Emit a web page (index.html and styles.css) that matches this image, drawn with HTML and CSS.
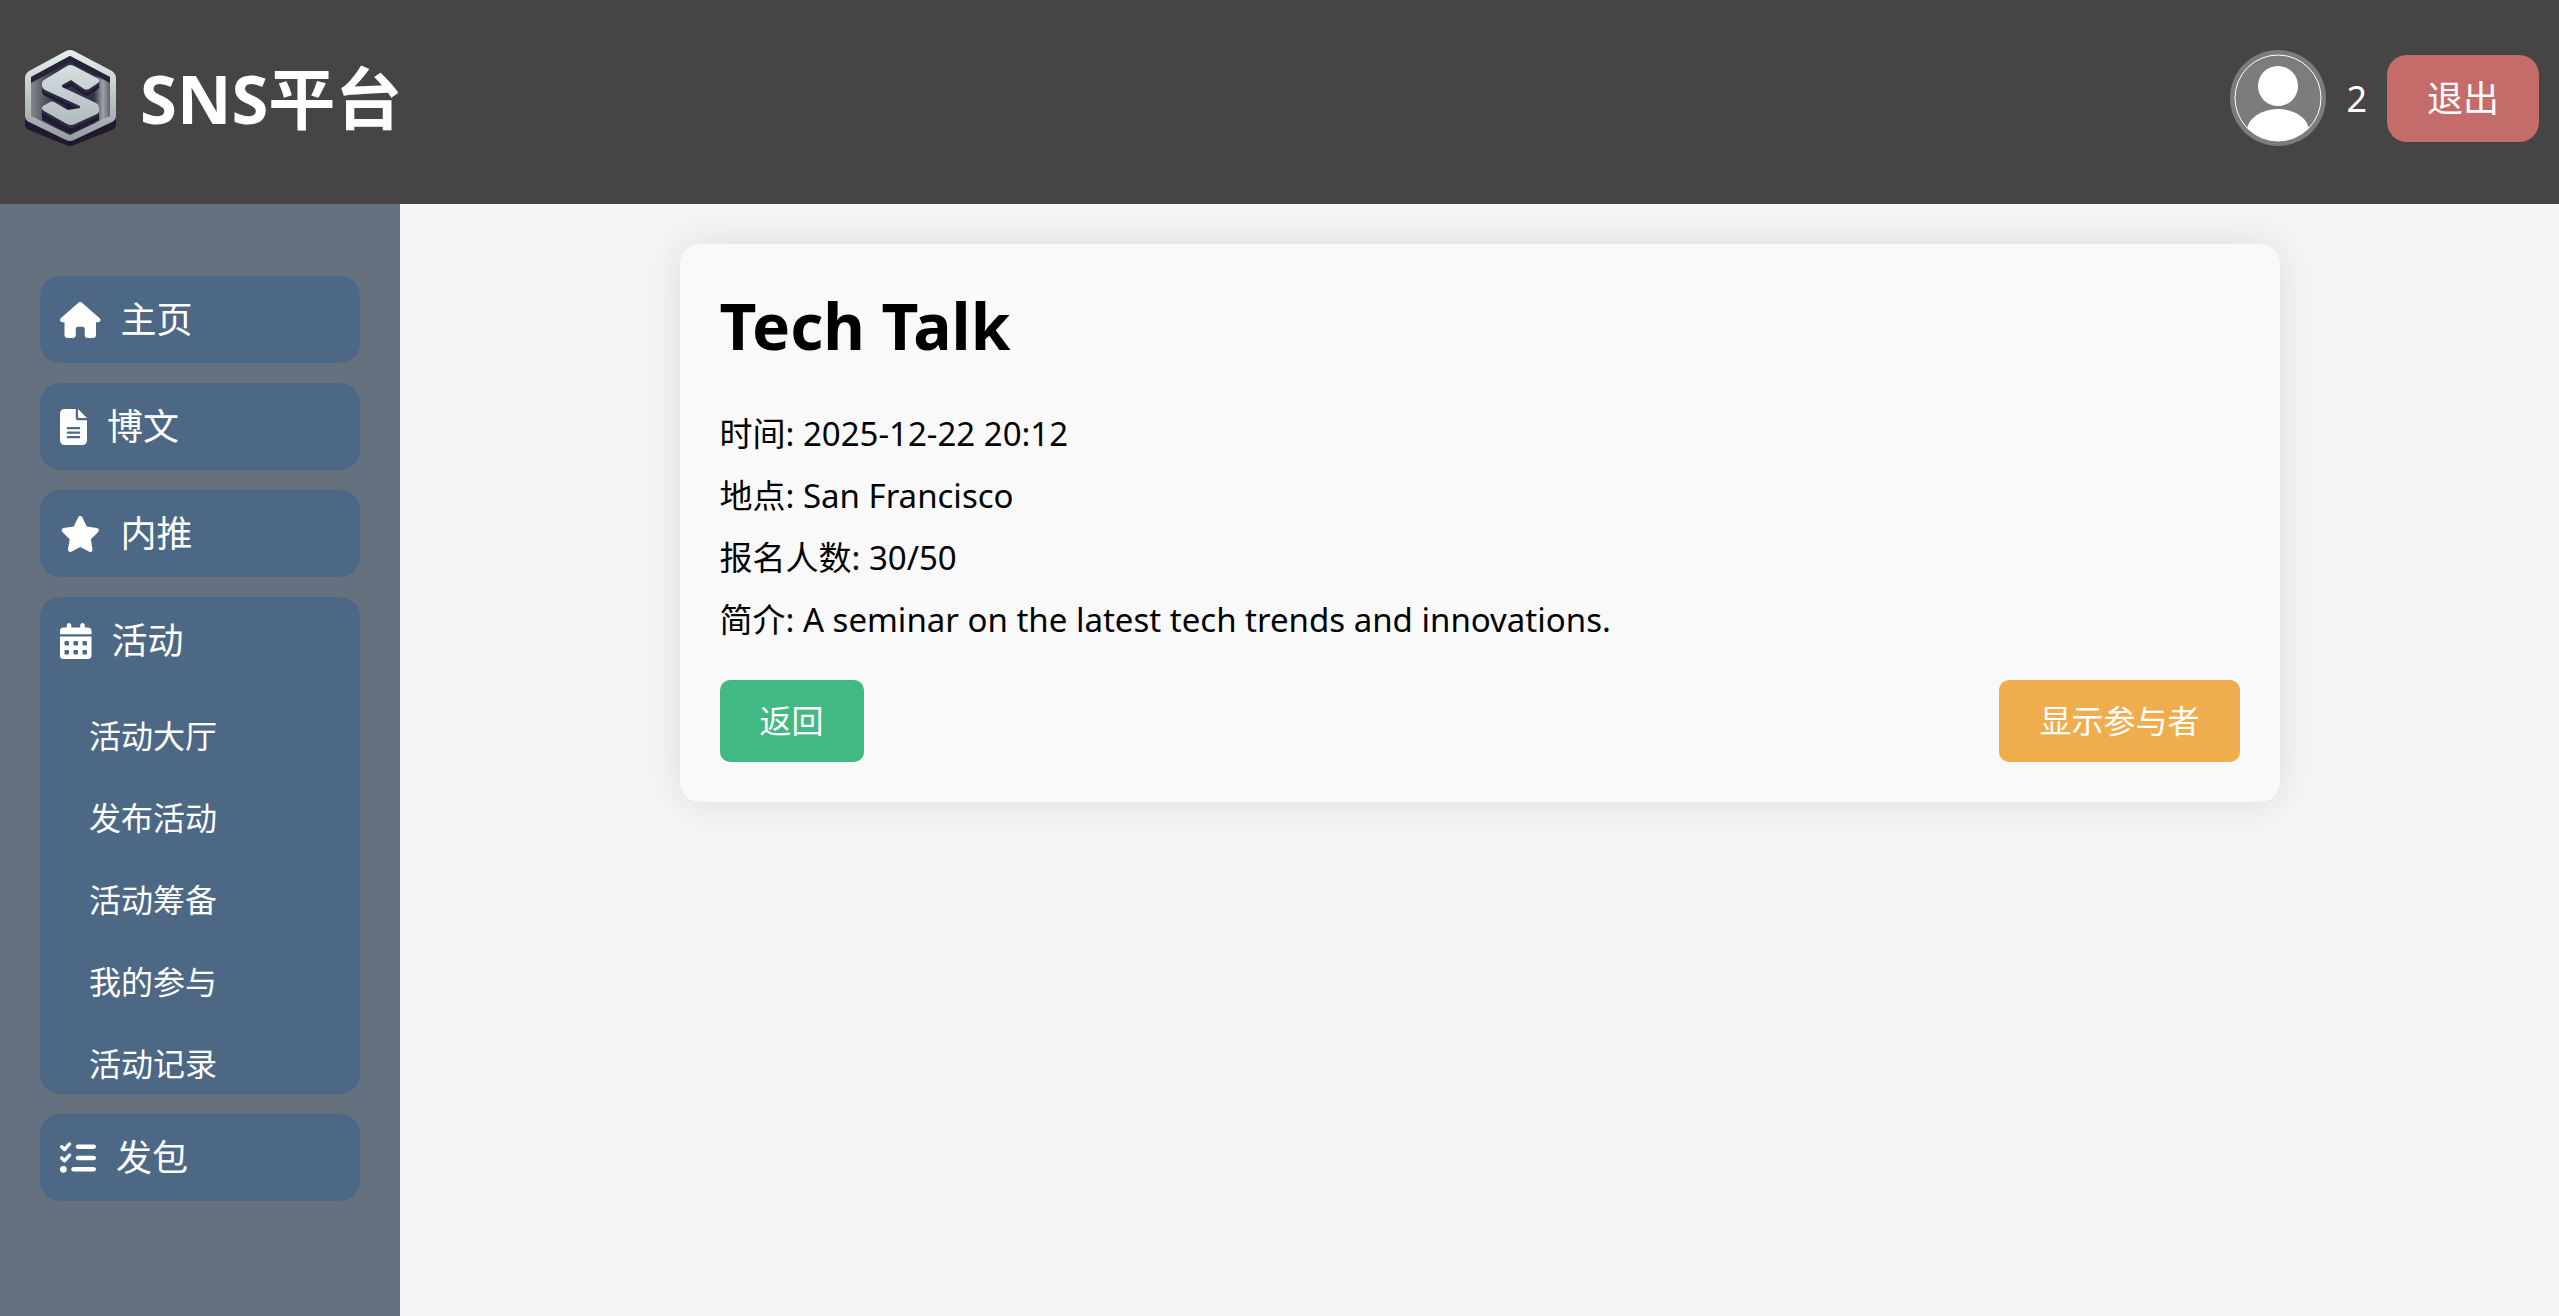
FILE: index.html
```html
<!DOCTYPE html>
<html lang="zh-CN">
<head>
<meta charset="utf-8">
<meta name="viewport" content="width=device-width, initial-scale=1">
<title>SNS平台</title>
<link rel="stylesheet" href="styles.css">
</head>
<body>
<header class="topbar">
  <div class="brand">
    <svg class="brand-logo" viewBox="0 0 96 96" aria-hidden="true">
      <defs>
        <linearGradient id="rim" x1="0" y1="0" x2="0" y2="1">
          <stop offset="0" stop-color="#e6f1ee"/>
          <stop offset="1" stop-color="#939ca2"/>
        </linearGradient>
        <linearGradient id="plate" x1="0" y1="0" x2="1" y2="0">
          <stop offset="0" stop-color="#85868c"/>
          <stop offset="0.15" stop-color="#5c5c68"/>
          <stop offset="0.3" stop-color="#34344a"/>
          <stop offset="0.8" stop-color="#34354a"/>
          <stop offset="0.91" stop-color="#a0a3a9"/>
          <stop offset="1" stop-color="#5f616d"/>
        </linearGradient>
        <linearGradient id="face" x1="0" y1="0" x2="0" y2="1">
          <stop offset="0" stop-color="#d6e0e0"/>
          <stop offset="1" stop-color="#b0b9bd"/>
        </linearGradient>
        <path id="letter" d="M45 16q3-2 7 0l23 12q4 2 1 5l-9 6q-2 1-5 0l-13-9-9 5v2l34 16q3 2 3 4v4q0 2-2 3L53 74q-4 2-8 0L22 61q-4-3-1-5l7-4q2-1 4 0l14 8 12-2v-2L23 40q-3-2-3-4v-3q0-2 2-3z"/>
      </defs>
      <path fill="#20182e" d="M44 6q4-2 8 0l38 21q4 2 4 7v40q0 4-4 6L52 95q-4 2-8 0L7 80q-4-2-4-6V34q0-5 4-7z"/>
      <path fill="url(#rim)" d="M44 1q4-2 8 0l38 20q4 3 4 7v38q0 4-4 6L52 90q-4 2-8 0L7 72q-4-2-4-6V28q0-4 4-7z"/>
      <path fill="url(#plate)" d="M48 6L88 27v39L48 85 9 66V27z"/>
      <path fill="#242337" d="M48 6L88 27v6L48 12 9 33v-6z"/>
      <path fill="#241d35" d="M20 56v14l28 14 29-14V56z"/>
      <use href="#letter" y="6" fill="#1f1a30"/>
      <use href="#letter" y="3" fill="#2c2c40"/>
      <use href="#letter" fill="url(#face)"/>
    </svg>
    <span class="brand-name">SNS平台</span>
  </div>
  <div class="account">
    <svg class="avatar" viewBox="0 0 96 96" role="img" aria-label="用户头像">
      <defs><clipPath id="disc"><circle cx="48" cy="48" r="43"/></clipPath></defs>
      <circle cx="48" cy="48" r="48" fill="#7c7c7c"/>
      <circle cx="48" cy="48" r="43" fill="none" stroke="#fff"/>
      <g fill="#fff" clip-path="url(#disc)">
        <circle cx="48" cy="36" r="20"/>
        <ellipse cx="48" cy="81" rx="31" ry="22"/>
      </g>
    </svg>
    <span class="account-name">2</span>
    <button class="logout" type="button">退出</button>
  </div>
</header>
<div class="layout">
  <nav class="sidebar" aria-label="主导航">
    <ul class="menu">
      <li class="menu-item">
        <a class="menu-link" href="#home">
          <svg class="icon" viewBox="0 0 576 512" aria-hidden="true"><path d="M575.8 255.5c0 18-15 32.1-32 32.1h-32l.7 160.2c0 2.7-.2 5.4-.5 8.1V472c0 22.1-17.9 40-40 40H456c-1.1 0-2.2 0-3.3-.1c-1.4 .1-2.8 .1-4.2 .1H416 392c-22.1 0-40-17.9-40-40V448 384c0-17.7-14.3-32-32-32H256c-17.7 0-32 14.3-32 32v64 24c0 22.1-17.9 40-40 40H160 128.1c-1.5 0-3-.1-4.5-.2c-1.2 .1-2.4 .2-3.6 .2H104c-22.1 0-40-17.9-40-40V360c0-.9 0-1.9 .1-2.8V287.6H32c-18 0-32-14-32-32.1c0-9 3-17 10-24L266.4 8c7-7 15-8 22-8s15 2 21 7L564.8 231.5c8 7 12 15 11 24z"/></svg>
          <span>主页</span>
        </a>
      </li>
      <li class="menu-item">
        <a class="menu-link" href="#posts">
          <svg class="icon" viewBox="0 0 384 512" aria-hidden="true"><path d="M64 0C28.7 0 0 28.7 0 64V448c0 35.3 28.7 64 64 64H320c35.3 0 64-28.7 64-64V160H256c-17.7 0-32-14.3-32-32V0H64zM256 0V128H384L256 0zM112 256H272c8.8 0 16 7.2 16 16s-7.2 16-16 16H112c-8.8 0-16-7.2-16-16s7.2-16 16-16zm0 64H272c8.8 0 16 7.2 16 16s-7.2 16-16 16H112c-8.8 0-16-7.2-16-16s7.2-16 16-16zm0 64H272c8.8 0 16 7.2 16 16s-7.2 16-16 16H112c-8.8 0-16-7.2-16-16s7.2-16 16-16z"/></svg>
          <span>博文</span>
        </a>
      </li>
      <li class="menu-item">
        <a class="menu-link" href="#referrals">
          <svg class="icon" viewBox="0 0 576 512" aria-hidden="true"><path d="M316.9 18C311.6 7 300.4 0 288.1 0s-23.4 7-28.8 18L195 150.3 51.4 171.5c-12 1.8-22 10.2-25.7 21.7s-.7 24.2 7.9 32.7L137.8 329 113.2 474.7c-2 12 3 24.2 12.9 31.3s23 8 33.8 2.3l128.3-68.5 128.3 68.5c10.8 5.7 23.9 4.9 33.8-2.3s14.9-19.3 12.9-31.3L438.5 329 542.7 225.9c8.6-8.5 11.7-21.2 7.9-32.7s-13.7-19.9-25.7-21.7L381.2 150.3 316.9 18z"/></svg>
          <span>内推</span>
        </a>
      </li>
      <li class="menu-item">
        <a class="menu-link" href="#activities">
          <svg class="icon" viewBox="0 0 448 512" aria-hidden="true"><path d="M128 0c17.7 0 32 14.3 32 32V64H288V32c0-17.7 14.3-32 32-32s32 14.3 32 32V64h48c26.5 0 48 21.5 48 48v48H0V112C0 85.5 21.5 64 48 64H96V32c0-17.7 14.3-32 32-32zM0 192H448V464c0 26.5-21.5 48-48 48H48c-26.5 0-48-21.5-48-48V192zm64 80v32c0 8.8 7.2 16 16 16h32c8.8 0 16-7.2 16-16V272c0-8.8-7.2-16-16-16H80c-8.8 0-16 7.2-16 16zm128 0v32c0 8.8 7.2 16 16 16h32c8.8 0 16-7.2 16-16V272c0-8.8-7.2-16-16-16H208c-8.8 0-16 7.2-16 16zm144-16c-8.8 0-16 7.2-16 16v32c0 8.8 7.2 16 16 16h32c8.8 0 16-7.2 16-16V272c0-8.8-7.2-16-16-16H336zM64 400v32c0 8.8 7.2 16 16 16h32c8.8 0 16-7.2 16-16V400c0-8.8-7.2-16-16-16H80c-8.8 0-16 7.2-16 16zm144-16c-8.8 0-16 7.2-16 16v32c0 8.8 7.2 16 16 16h32c8.8 0 16-7.2 16-16V400c0-8.8-7.2-16-16-16H208zm112 16v32c0 8.8 7.2 16 16 16h32c8.8 0 16-7.2 16-16V400c0-8.8-7.2-16-16-16H336c-8.8 0-16 7.2-16 16z"/></svg>
          <span>活动</span>
        </a>
        <ul class="submenu">
          <li><a class="submenu-link" href="#hall">活动大厅</a></li>
          <li><a class="submenu-link" href="#publish">发布活动</a></li>
          <li><a class="submenu-link" href="#prepare">活动筹备</a></li>
          <li><a class="submenu-link" href="#joined">我的参与</a></li>
          <li><a class="submenu-link" href="#history">活动记录</a></li>
        </ul>
      </li>
      <li class="menu-item">
        <a class="menu-link" href="#tasks">
          <svg class="icon" viewBox="0 0 512 512" aria-hidden="true"><path d="M152.1 38.2c9.9 8.9 10.7 24 1.8 33.9l-72 80c-4.4 4.9-10.6 7.8-17.2 7.9s-12.9-2.4-17.6-7L7 113C-2.3 103.6-2.3 88.4 7 79s24.6-9.4 33.9 0l22.1 22.1 55.1-61.2c8.9-9.9 24-10.7 33.9-1.8zm0 160c9.9 8.9 10.7 24 1.8 33.9l-72 80c-4.4 4.9-10.6 7.8-17.2 7.9s-12.9-2.4-17.6-7L7 273c-9.4-9.4-9.4-24.6 0-33.9s24.6-9.4 33.9 0l22.1 22.1 55.1-61.2c8.9-9.9 24-10.7 33.9-1.8zM224 96c0-17.7 14.3-32 32-32H480c17.7 0 32 14.3 32 32s-14.3 32-32 32H256c-17.7 0-32-14.3-32-32zm0 160c0-17.7 14.3-32 32-32H480c17.7 0 32 14.3 32 32s-14.3 32-32 32H256c-17.7 0-32-14.3-32-32zM160 416c0-17.7 14.3-32 32-32H480c17.7 0 32 14.3 32 32s-14.3 32-32 32H192c-17.7 0-32-14.3-32-32zM48 368a48 48 0 1 1 0 96 48 48 0 1 1 0-96z"/></svg>
          <span>发包</span>
        </a>
      </li>
    </ul>
  </nav>
  <main class="content">
    <article class="card">
      <h1 class="card-title">Tech Talk</h1>
      <div class="details">
        <p>时间: 2025-12-22 20:12</p>
        <p>地点: San Francisco</p>
        <p>报名人数: 30/50</p>
        <p>简介: A seminar on the latest tech trends and innovations.</p>
      </div>
      <div class="actions">
        <button class="button button-back" type="button">返回</button>
        <button class="button button-members" type="button">显示参与者</button>
      </div>
    </article>
  </main>
</div>
</body>
</html>
```
FILE: styles.css
```css
* {
  box-sizing: border-box;
}

body {
  display: flex;
  flex-direction: column;
  min-height: 100vh;
  margin: 0;
  background: #f5f5f5;
  color: #000;
  font-family: "Noto Sans", "Noto Sans CJK SC", sans-serif;
  font-size: 32px;
  line-height: 42px;
}

h1,
p,
ul {
  margin: 0;
  padding: 0;
}

ul {
  list-style: none;
}

a {
  color: inherit;
  text-decoration: none;
}

button {
  border: 0;
  color: #fff;
  font-family: inherit;
  cursor: pointer;
}

.topbar {
  display: flex;
  justify-content: space-between;
  align-items: center;
  padding: 50px 20px 58px 22px;
  background: #474445;
  color: #fff;
}

.brand,
.account {
  display: flex;
  align-items: center;
}

.brand {
  gap: 22px;
}

.brand-logo,
.avatar {
  display: block;
  width: 96px;
  height: 96px;
}

.brand-name {
  font-size: 67px;
  font-weight: 700;
  line-height: 88px;
}

.account {
  gap: 20px;
  font-size: 36px;
  line-height: 47px;
}

.logout {
  padding: 20px 40px;
  border-radius: 20px;
  background: #c46c6a;
  font-size: 36px;
  line-height: 47px;
}

.layout {
  display: flex;
  flex: 1;
}

.sidebar {
  flex: 0 0 400px;
  padding: 72px 40px 40px;
  background: #65717f;
  color: #fff;
}

.menu {
  display: flex;
  flex-direction: column;
  gap: 20px;
}

.menu-item {
  border-radius: 20px;
  background: #4d6885;
}

.menu-link {
  display: flex;
  align-items: center;
  gap: 20px;
  padding: 20px;
  font-size: 36px;
  line-height: 47px;
}

.icon {
  height: 36px;
  fill: currentColor;
}

.submenu {
  display: flex;
  flex-direction: column;
  gap: 40px;
  padding: 31px 49px 9px;
}

.submenu-link {
  display: block;
}

.content {
  flex: 1;
  padding: 40px;
}

.card {
  max-width: 1600px;
  margin: 0 auto;
  padding: 40px;
  border-radius: 20px;
  background: #f9f9f9;
  box-shadow: 0 0 40px rgba(0, 0, 0, 0.1);
}

.card-title {
  font-size: 64px;
  line-height: 84px;
}

.details {
  display: flex;
  flex-direction: column;
  gap: 20px;
  margin: 45px 0 39px;
  font-size: 33px;
}

.actions {
  display: flex;
  justify-content: space-between;
}

.button {
  padding: 20px 40px;
  border-radius: 10px;
  font-size: 32px;
  line-height: 42px;
}

.button-back {
  background: #42b983;
}

.button-members {
  background: #f0ad4e;
}
```
